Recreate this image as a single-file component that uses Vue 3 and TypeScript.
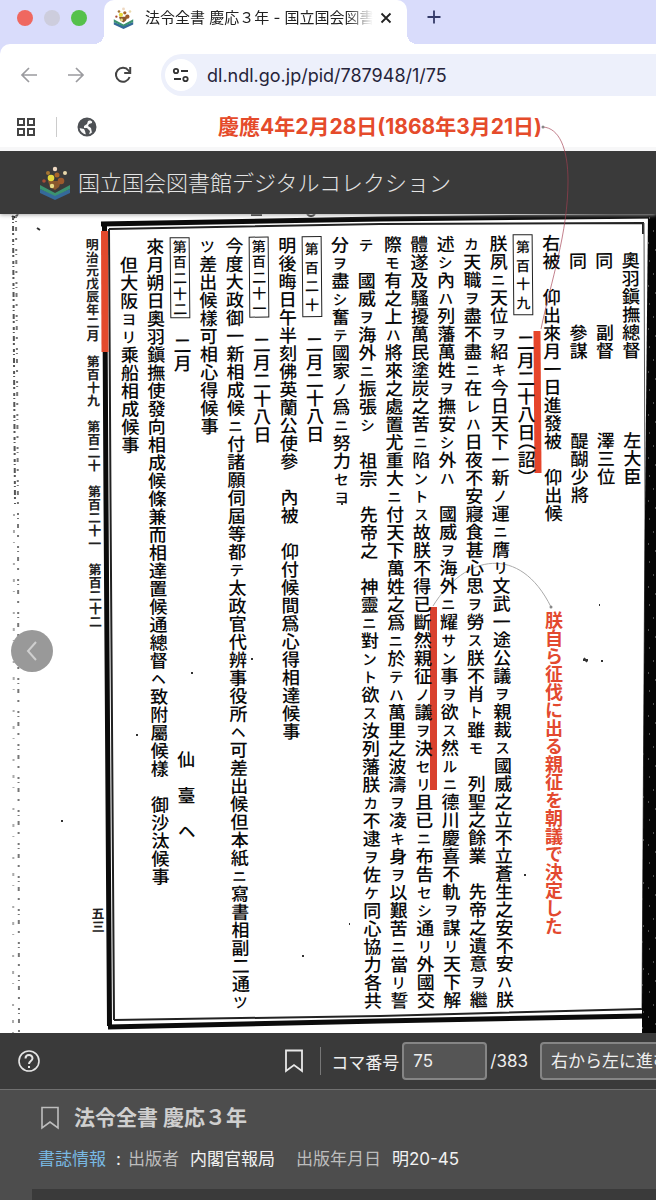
<script setup lang="ts">
import { ref } from 'vue'

interface Glyph { ch: string; kind: string }
interface Column { tag?: string; text: string; note?: string }

const address = ref('dl.ndl.go.jp/pid/787948/1/75')
const frame = ref('75')
const direction = ref('rtl')

const columns: Column[] = [
  { text: '　奧羽鎭撫總督　　　　左大臣' },
  { text: '　同　　　副督　　　　澤三位' },
  { text: '　同　　　參謀　　　　醍醐少將' },
  { text: '右被　仰出來月一日進發被　仰出候' },
  { tag: '第百十九', text: '二月二十八日（詔）' },
  { text: '朕夙ニ天位ヲ紹キ今日天下一新ノ運ニ膺リ文武一途公議ヲ親裁ス國威之立不立蒼生之安不安ハ朕' },
  { text: 'カ天職ヲ盡不盡ニ在レハ日夜不安寢食甚心思ヲ勞ス朕不肖ト雖モ　列聖之餘業　先帝之遺意ヲ繼' },
  { text: '述シ內ハ列藩萬姓ヲ撫安シ外ハ　國威ヲ海外ニ耀サン事ヲ欲ス然ルニ德川慶喜不軌ヲ謀リ天下解' },
  { text: '體遂及騷擾萬民塗炭之苦ニ陷ントス故朕不得已斷然親征ノ議ヲ決セリ且已ニ布告セシ通リ外國交' },
  { text: '際モ有之上ハ將來之處置尤重大ニ付天下萬姓之爲ニ於テハ萬里之波濤ヲ凌キ身ヲ以艱苦ニ當リ誓' },
  { text: 'テ　國威ヲ海外ニ振張シ　祖宗　先帝之　神靈ニ對ント欲ス汝列藩朕カ不逮ヲ佐ケ同心協力各共' },
  { text: '分ヲ盡シ奮テ國家ノ爲ニ努力セヨ' },
  { tag: '第百二十', text: '二月二十八日' },
  { text: '明後晦日午半刻佛英蘭公使參　內被　仰付候間爲心得相達候事' },
  { tag: '第百二十一', text: '二月二十八日' },
  { text: '今度大政御一新相成候ニ付諸願伺屆等都テ太政官代辨事役所ヘ可差出候但本紙ニ寫書相副二通ツ' },
  { text: 'ツ差出候樣可相心得候事' },
  { tag: '第百二十二', text: '二月', note: '仙　臺　ヘ' },
  { text: '來月朔日奧羽鎭撫使發向相成候條兼而相達置候通總督ヘ致附屬候樣　御沙汰候事' },
  { text: '　但大阪ヨリ乘船相成候事' }
]

function glyphs(text: string): Glyph[] {
  return Array.from(text).map((ch) => ({
    ch,
    kind: /[ァ-ヶ]/.test(ch) ? 'kana' : ch === '（' ? 'open' : ch === '）' ? 'close' : 'kanji'
  }))
}
</script>

<template>
  <div class="window">
    <header class="browser">
      <div class="tabstrip">
        <div class="lights">
          <button class="light red" aria-label="閉じる"></button>
          <button class="light grey" aria-label="しまう"></button>
          <button class="light green" aria-label="拡大"></button>
        </div>
        <div class="tab">
          <svg class="favicon" viewBox="0 0 32 34" aria-hidden="true">
            <use href="#ndl-mark" />
          </svg>
          <span class="tab-title">法令全書 慶応３年 - 国立国会図書</span>
          <button class="plain" aria-label="タブを閉じる">
            <svg width="12" height="12" viewBox="0 0 12 12"><path d="M1.5 1.5l9 9M10.5 1.5l-9 9" stroke="#222" stroke-width="1.8" /></svg>
          </button>
        </div>
        <button class="plain new-tab" aria-label="新しいタブ">
          <svg width="14" height="14" viewBox="0 0 14 14"><path d="M7 .5v13M.5 7h13" stroke="#343a68" stroke-width="1.8" /></svg>
        </button>
      </div>

      <div class="navbar">
        <button class="plain" aria-label="戻る">
          <svg width="18" height="18" viewBox="0 0 18 18" fill="none" stroke="#9b9b9f" stroke-width="1.7"><path d="M17 9H2M9 2L2 9l7 7" /></svg>
        </button>
        <button class="plain" aria-label="進む">
          <svg width="18" height="18" viewBox="0 0 18 18" fill="none" stroke="#9b9b9f" stroke-width="1.7"><path d="M1 9h15M9 2l7 7-7 7" /></svg>
        </button>
        <button class="plain" aria-label="再読み込み">
          <svg width="18" height="18" viewBox="0 0 18 18" fill="none" stroke="#444" stroke-width="2"><path d="M15.6 11A7 7 0 1 1 14.500 4.500L16 6.500" /><path d="M16.200 1v6h-6" /></svg>
        </button>
        <div class="omnibox">
          <button class="site-info" aria-label="サイト情報">
            <svg width="18" height="16" viewBox="0 0 18 16" fill="none" stroke="#333" stroke-width="1.8"><circle cx="4" cy="4" r="2.200" /><path d="M9 4h7M2 12h7" /><circle cx="13.500" cy="12" r="2.200" /></svg>
          </button>
          <input v-model="address" class="address" aria-label="アドレス" />
        </div>
      </div>

      <div class="bookmarks">
        <button class="plain" aria-label="アプリ">
          <svg width="20" height="20" viewBox="0 0 20 20" fill="none" stroke="#444" stroke-width="2"><path d="M2 2h6v6H2zM12 2h6v6h-6zM2 12h6v6H2zM12 12h6v6h-6z" /></svg>
        </button>
        <span class="divider"></span>
        <button class="plain" aria-label="ブックマーク">
          <svg width="20" height="20" viewBox="0 0 20 20"><circle cx="10" cy="10" r="8.500" fill="#f8f8f8" stroke="#4d5054" stroke-width="2" /><path d="M10 2C4 2 1 7 2 11l5 1 1 2 1 4h3l1-4-3-3H7V9l3-2 1-3 3-1zM15 4l4 5-1 5-3 2-1-5-3-2 1-2 3-1z" fill="#4d5054" /></svg>
        </button>
        <span class="date-note">慶應4年2月28日(1868年3月21日)</span>
      </div>
    </header>

    <div class="site-header">
      <svg class="site-logo" viewBox="0 0 32 34" aria-hidden="true">
        <g id="ndl-mark">
          <path d="M1 23l15 6 15-6v4l-15 7-15-7z" fill="#35699a" />
          <path d="M1 19l15 8 15-8v4l-15 7-15-7z" fill="#3b9270" />
          <path d="M9 15h13l-2 6-4 3-5-3z" fill="#8a582e" />
          <circle cx="16" cy="3" r="2.200" fill="#efd9c2" /><circle cx="9" cy="7" r="2" fill="#a67532" />
          <circle cx="18" cy="9" r="2.500" fill="#a8652a" /><circle cx="26" cy="7" r="2" fill="#e9d8ab" />
          <circle cx="12" cy="12" r="3.300" fill="#e5d83d" /><circle cx="22" cy="15" r="3.300" fill="#9c5a2c" />
          <circle cx="5" cy="15" r="1.800" fill="#a84d35" /><circle cx="13" cy="20" r="2.200" fill="#e8db87" />
        </g>
      </svg>
      <span class="site-name">国立国会図書館デジタルコレクション</span>
    </div>

    <main class="viewer">
      <svg class="ink" viewBox="0 0 656 819" preserveAspectRatio="none" aria-hidden="true">
        <defs>
          <pattern id="grain" width="17" height="43" patternUnits="userSpaceOnUse">
            <path d="M3 4h1M11 9h1M7 17h1M14 24h1M2 29h1M9 36h2M13 40h1" stroke="#999" />
          </pattern>
        </defs>
        <path d="M101 10L380 5L656 2" class="heavy" />
        <path d="M109 15L380 10L643 9V20" class="thin" />
        <path d="M104.500 12L106 286L109.500 812" class="heavy" />
        <path d="M109 15L110.500 286L114 806" class="thin" />
        <path d="M108 813L380 807L642 802" class="heavy" />
        <path d="M114 806L380 802L642 795" class="thin" />
        <path d="M644 9L645 300L642 795" stroke="#555" fill="none" />
        <path d="M648 0h8v819h-14V795L645 300z" fill="#050505" />
        <path d="M648 0h8v819h-14V795L645 300z" fill="url(#grain)" />
        <path d="M251 1h11M307 0q4 4 8 0M12 2q3 3 6-2" stroke="#111" stroke-width="2" fill="none" />
        <path d="M13 3L15 290" class="edge" />
        <path d="M16 2L18 300L19 819" class="edge faint" />
        <path d="M14 300L13 819" class="edge sparse" />
        <path d="M583 446h5M584 444l3 4M601 447h2M524 661h2M302 742h2M251 445h2M136 521h2M191 459h2M37 14l3 2M61 607h2M349 710h1M599 391h1M341 290h2" stroke="#333" stroke-width="2" />
        <path d="M104.500 17L105 138" stroke="#e34a2d" stroke-width="7" />
        <path d="M537 117L538 259" stroke="#e6452b" stroke-width="7" />
        <path d="M433.500 393V576" stroke="#d9412e" stroke-width="7" />
        <path d="M433 392C465 340 520 330 551 393" stroke="#aaa" fill="none" />
        <circle cx="551" cy="393" r="1.500" fill="#888" />
      </svg>

      <div class="sheet">
        <div class="margin-text">
          <span>明治元戊辰年二月　第百十九　第百二十　第百二十一　第百二十二</span>
          <span>五三</span>
        </div>
        <article class="body-text">
          <div v-for="(col, i) in columns" :key="i" class="column">
            <span v-if="col.tag" class="tag"><span v-for="(c, t) in Array.from(col.tag)" :key="t">{{ c }}</span></span>
            <p class="line"><span v-for="(g, k) in glyphs(col.text)" :key="k" :class="g.kind">{{ g.ch }}</span></p>
            <p v-if="col.note" class="line note">{{ col.note }}</p>
          </div>
        </article>
      </div>

      <p class="decree-note">朕自ら征伐に出る親征を朝議で決定した</p>
      <button class="previous" aria-label="前のコマ">
        <svg width="16" height="24" viewBox="0 0 16 24" fill="none" stroke="#cfcfcf" stroke-width="2"><path d="M12 3L4 12l8 9" /></svg>
      </button>
    </main>

    <div class="controls">
      <button class="plain help" aria-label="ヘルプ">
        <svg width="24" height="24" viewBox="0 0 24 24" fill="none" stroke="#e4e4e4" stroke-width="1.600"><circle cx="12" cy="12" r="10" /><path d="M8.500 9.500C8.500 5 15.500 5 15.500 9.300C15.500 12 12 12 12 15" stroke-width="2" /><path d="M12 17v2" stroke-width="2" /></svg>
      </button>
      <button class="plain" aria-label="しおり">
        <svg width="20" height="24" viewBox="0 0 20 24" fill="none" stroke="#e8e8e8" stroke-width="1.800"><path d="M2 1.500h16V22l-8-6-8 6z" /></svg>
      </button>
      <span class="separator"></span>
      <label for="frame-number">コマ番号</label>
      <input id="frame-number" v-model="frame" class="frame-number" />
      <span class="total">/383</span>
      <select v-model="direction" class="direction" aria-label="進む方向">
        <option value="rtl">右から左に進む</option>
        <option value="ltr">左から右に進む</option>
      </select>
    </div>

    <section class="details">
      <h1>
        <svg width="20" height="24" viewBox="0 0 20 24" fill="none" stroke="#bdbdbd" stroke-width="1.600" aria-hidden="true"><path d="M2 1.500h16V22l-8-6-8 6z" /></svg>
        法令全書 慶応３年
      </h1>
      <div class="facts">
        <a href="#info">書誌情報</a><span class="colon">:</span>
        <span class="key">出版者</span><span class="value">内閣官報局</span>
        <span class="key">出版年月日</span><span class="value">明20-45</span>
      </div>
      <div class="next-panel"></div>
    </section>

    <svg class="date-arc" width="40" height="212" viewBox="0 0 40 212" fill="none" aria-hidden="true">
      <path d="M6 4C22 5 31 25 31 58C31 110 14 158 4 206" stroke="#a33e50" stroke-opacity=".65" />
      <circle cx="6" cy="4" r="1.500" fill="#888" />
    </svg>
  </div>
</template>

<style>
body {
  background: #4d4d4d;
}
</style>

<style scoped>
.window {
  position: relative;
  display: flex;
  flex-direction: column;
  min-height: 100vh;
  overflow: hidden;
  background: #4d4d4d;
  font-family: Inter, "Noto Sans CJK JP", sans-serif;
  color: #222;
}
button, input, select {
  font: inherit;
  color: inherit;
}
.plain {
  display: flex;
  padding: 0;
  border: 0;
  background: none;
}
.browser {
  background: #d9dcfb;
}
.tabstrip {
  display: flex;
  height: 44px;
}
.lights {
  display: flex;
  gap: 11px;
  width: 87px;
  padding: 10px 0 0 17px;
}
.light {
  width: 16px;
  height: 16px;
  padding: 0;
  border: 0;
  border-radius: 8px;
}
.red { background: #ef6860; }
.grey { background: #cdcddd; }
.green { background: #55c14b; }
.tab {
  position: relative;
  display: flex;
  align-items: center;
  box-sizing: border-box;
  width: 303px;
  padding: 0 15px 8px 9px;
  border-radius: 10px 10px 0 0;
  background: #fff;
}
.tab::before, .tab::after {
  content: "";
  position: absolute;
  bottom: 0;
  width: 10px;
  height: 10px;
}
.tab::before {
  right: 100%;
  background: radial-gradient(circle at 0 0, #d9dcfb 10px, #fff 10px);
}
.tab::after {
  left: 100%;
  background: radial-gradient(circle at 100% 0, #d9dcfb 10px, #fff 10px);
}
.favicon {
  width: 21px;
  height: 22px;
  margin-right: 11px;
}
.tab-title {
  flex: 1;
  white-space: nowrap;
  font-size: 15px;
  line-height: 22px;
  mask-image: linear-gradient(90deg, #000 86%, transparent 97%);
}
.new-tab {
  margin: 10px 0 0 20px;
  align-self: flex-start;
}
.navbar {
  display: flex;
  align-items: center;
  gap: 29px;
  height: 62px;
  padding-left: 20px;
  border-radius: 10px 0 0 0;
  background: #fff;
}
.omnibox {
  display: flex;
  flex: 1;
  align-items: center;
  height: 42px;
  padding-left: 4px;
  border-radius: 21px 0 0 21px;
  background: #edf0fb;
}
.site-info {
  display: grid;
  place-items: center;
  width: 32px;
  height: 32px;
  padding: 0;
  border: 0;
  border-radius: 16px;
  background: #fff;
}
.address {
  flex: 1;
  min-width: 0;
  padding: 0 10px;
  border: 0;
  background: none;
  font-size: 18px;
  color: #26243a;
}
.bookmarks {
  display: flex;
  align-items: center;
  height: 41px;
  padding: 0 16px;
  background: #fff;
}
.divider {
  width: 1px;
  height: 20px;
  margin: 0 20px;
  background: #ccc;
}
.date-note {
  margin-left: 121px;
  font-size: 21px;
  line-height: 24px;
  font-weight: 700;
  color: #e54b2b;
  white-space: nowrap;
}
.site-header {
  display: flex;
  align-items: center;
  gap: 7px;
  height: 63px;
  margin-top: 4px;
  padding-left: 39px;
  background: #3a3a3a;
  box-shadow: 0 -4px 0 #f7f7f8, 0 1px 4px #aaa;
  z-index: 1;
}
.site-logo {
  width: 32px;
  height: 34px;
}
.site-name {
  font-size: 22px;
  line-height: 32px;
  font-weight: 300;
  color: #e4e4e4;
  white-space: nowrap;
}
.viewer {
  position: relative;
  background: #fff;
}
.ink {
  position: absolute;
  inset: 0;
  width: 100%;
  height: 100%;
}
.heavy {
  fill: none;
  stroke: #0b0b0b;
  stroke-width: 5;
}
.thin {
  fill: none;
  stroke: #222;
  stroke-width: 2;
}
.edge {
  fill: none;
  stroke: #555;
  stroke-width: 2;
  stroke-dasharray: 3 2 1 3 5 2 2 4;
}
.faint {
  stroke: #777;
  stroke-dasharray: 2 3 1 5 4 7 2 9;
}
.sparse {
  stroke: #aaa;
  stroke-dasharray: 2 14 3 9 1 20;
}
.sheet {
  position: relative;
  display: flex;
  padding: 22px 11px 23px 0;
  transform: rotate(-0.5deg);
}
.margin-text {
  display: flex;
  flex-direction: column;
  justify-content: space-between;
  box-sizing: border-box;
  flex: 0 0 117px;
  padding: 0 14px 79px 86px;
  font-size: 13px;
  line-height: 17px;
  font-weight: 700;
}
.margin-text span {
  writing-mode: vertical-rl;
  white-space: nowrap;
}
.body-text {
  display: flex;
  flex-direction: row-reverse;
  flex: 1;
  min-height: 774px;
}
.column {
  display: flex;
  flex: 1;
  flex-direction: column;
  align-items: center;
  min-width: 0;
  color: #090909;
}
.tag {
  display: flex;
  flex-direction: column;
  align-items: center;
  justify-content: space-evenly;
  box-sizing: border-box;
  width: 20px;
  height: 81px;
  margin-bottom: 18px;
  border: 1px solid #222;
  font-size: 14px;
  line-height: 15px;
  font-weight: 500;
}
.line {
  margin: 0;
  writing-mode: vertical-rl;
  white-space: nowrap;
  font-size: 18px;
  line-height: 26px;
  font-weight: 500;
}
.note {
  margin-top: 378px;
}
.kana {
  display: inline-block;
  inline-size: 18px;
  text-align: center;
  font-size: 15px;
}
.open { margin-inline-start: -9px; }
.close { margin-inline-end: -9px; }
.decree-note {
  position: absolute;
  top: 397px;
  right: 92px;
  margin: 0;
  writing-mode: vertical-rl;
  font-size: 18px;
  line-height: 24px;
  font-weight: 700;
  color: #e3492f;
  white-space: nowrap;
}
.previous {
  position: absolute;
  left: 11px;
  top: 416px;
  display: grid;
  place-items: center;
  width: 42px;
  height: 42px;
  padding: 0;
  border: 0;
  border-radius: 21px;
  background: #999;
}
.controls {
  display: flex;
  align-items: center;
  height: 56px;
  padding-left: 17px;
  border-bottom: 1px solid #707070;
  background: #3a3a3a;
  color: #eee;
  font-size: 17px;
  white-space: nowrap;
}
.help {
  margin-right: auto;
}
.separator {
  width: 1px;
  height: 28px;
  margin: 0 10px 0 16px;
  background: #777;
}
.frame-number, .direction {
  box-sizing: border-box;
  height: 38px;
  border: 2px solid #858585;
  border-radius: 4px;
  background: #555;
}
.frame-number {
  width: 85px;
  margin: 0 3px;
  padding: 0 9px;
}
.direction {
  appearance: none;
  flex: 0 0 150px;
  margin: 0 -34px 0 12px;
  padding: 0 9px;
}
.details {
  display: flex;
  flex: 1;
  flex-direction: column;
  background: #4d4d4d;
}
h1 {
  display: flex;
  align-items: center;
  gap: 14px;
  margin: 12px 0 0 40px;
  font-size: 21px;
  line-height: 32px;
  font-weight: 700;
  color: #cfcfcf;
}
.facts {
  display: flex;
  margin: 12px 0 0 38px;
  font-size: 17px;
  line-height: 26px;
  color: #f2f2f2;
  white-space: nowrap;
}
.facts a {
  color: #79b9e3;
  text-decoration: none;
}
.colon {
  margin: 0 7px 0 10px;
}
.key {
  margin-right: 11px;
  color: #bdbdbd;
}
.value {
  margin-right: 21px;
}
.next-panel {
  flex: 1;
  min-height: 12px;
  margin: 17px 0 0 32px;
  background: #3a3a3a;
}
.date-arc {
  position: absolute;
  top: 123px;
  right: 79px;
  z-index: 2;
}
</style>
